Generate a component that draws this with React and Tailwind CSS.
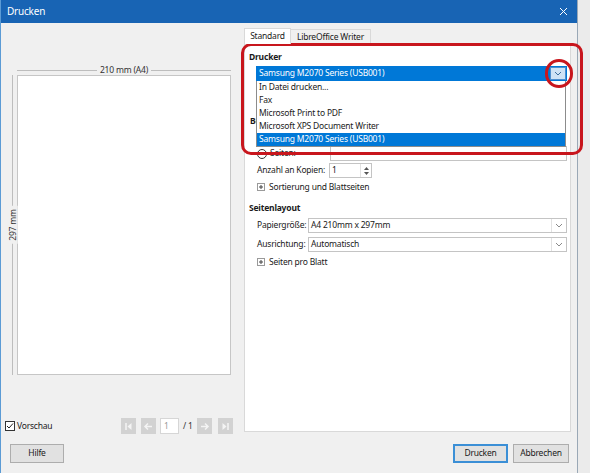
import React from "react";

function Chevron({ color = "#606060" }) {
  return (
    <svg width="8" height="5" viewBox="0 0 8 5">
      <path d="M1 1 L4 4 L7 1" fill="none" stroke={color} strokeWidth="1" />
    </svg>
  );
}

function Plus() {
  return (
    <span className="flex h-[8px] w-[8px] items-center justify-center border border-[#9a9a9a] bg-white">
      <svg width="6" height="6" viewBox="0 0 6 6">
        <path d="M3 1 V5 M1 3 H5" stroke="#444" strokeWidth="1" />
      </svg>
    </span>
  );
}

function Combo({ value, className = "" }) {
  return (
    <div className={"flex h-[15px] items-center border border-[#c4c4c4] bg-white " + className}>
      <span className="flex-1 pl-[2px] leading-none">{value}</span>
      <span className="flex h-full w-[15px] items-center justify-center border-l border-[#e2e2e2]">
        <Chevron color="#8a8a8a" />
      </span>
    </div>
  );
}

function NavBtn({ children }) {
  return (
    <span className="flex h-[16px] w-[15px] items-center justify-center bg-[#d2d2d2]">
      <svg width="11" height="11" viewBox="0 0 11 11">
        {children}
      </svg>
    </span>
  );
}

export default function App() {
  return (
    <div className="relative flex h-[473px] w-[590px] overflow-hidden bg-[#ebebeb] font-['Noto_Sans',sans-serif] text-[8.5px] tracking-[-0.2px] text-[#1a1a1a]">
      <div className="flex h-full w-[578px] flex-col border-x border-l-[#5b9bd5] border-r-[#9aa8b6] bg-[#f0f0f0]">
        {/* title bar */}
        <div className="flex h-[23px] items-center justify-between bg-[#1864b4] pl-[6px] pr-[9px] text-[10px] text-white">
          <span>Drucken</span>
          <svg width="9" height="9" viewBox="0 0 9 9">
            <path d="M1 1 L8 8 M8 1 L1 8" stroke="#fff" strokeWidth="1" />
          </svg>
        </div>

        <div className="flex h-[414px]">
          {/* preview column */}
          <div className="flex w-[242px] flex-col">
            <div className="relative ml-[16px] mt-[42px] h-[10px] w-[214px]">
              <div className="absolute left-0 right-0 top-[5px] border-t border-[#bdbdbd]" />
              <div className="absolute inset-0 flex justify-center">
                <span className="bg-[#f0f0f0] px-[3px] leading-[10px] text-[#333]">210 mm (A4)</span>
              </div>
            </div>
            <div className="flex h-[300px] pl-[7px]">
              <div className="relative w-[9px]">
                <div className="absolute bottom-0 left-[4px] top-0 border-l border-[#bdbdbd]" />
                <div className="absolute inset-0 flex items-center justify-center">
                  <span className="-rotate-90 whitespace-nowrap bg-[#f0f0f0] px-[3px] leading-[10px] text-[#333]">297 mm</span>
                </div>
              </div>
              <div className="w-[214px] border border-[#c6c6c6] bg-white" />
            </div>
            <div className="mt-[43px] flex h-[16px] items-center">
              <div className="flex w-[120px] items-center pl-[4px]">
                <span className="flex h-[10px] w-[10px] items-center justify-center border border-[#333] bg-white">
                  <svg width="8" height="8" viewBox="0 0 8 8">
                    <path d="M1 4 L3 6 L7 1.5" fill="none" stroke="#222" strokeWidth="1" />
                  </svg>
                </span>
                <span className="ml-[2px]">Vorschau</span>
              </div>
              <div className="flex items-center">
                <NavBtn>
                  <path d="M3 2 V9" stroke="#f4f4f4" strokeWidth="1.5" />
                  <path d="M8.5 2 L4.5 5.5 L8.5 9 Z" fill="#f4f4f4" />
                </NavBtn>
                <span className="ml-[5px]">
                  <NavBtn>
                    <path d="M2 5.5 H9 M5 2.5 L2 5.5 L5 8.5" fill="none" stroke="#f4f4f4" strokeWidth="1.5" />
                  </NavBtn>
                </span>
                <span className="ml-[4px] flex h-[16px] w-[19px] items-center border border-[#d6d6d6] bg-white pl-[3px] text-[#9a9a9a]">1</span>
                <span className="ml-[4px] w-[14px] text-[#333]">/ 1</span>
                <NavBtn>
                  <path d="M2 5.5 H9 M6 2.5 L9 5.5 L6 8.5" fill="none" stroke="#f4f4f4" strokeWidth="1.5" />
                </NavBtn>
                <span className="ml-[6px]">
                  <NavBtn>
                    <path d="M8 2 V9" stroke="#f4f4f4" strokeWidth="1.5" />
                    <path d="M2.5 2 L6.5 5.5 L2.5 9 Z" fill="#f4f4f4" />
                  </NavBtn>
                </span>
              </div>
            </div>
          </div>

          {/* settings column */}
          <div className="flex flex-1 flex-col pl-[1px] pr-[6px]">
            <div className="mt-[6px] flex h-[15px] items-end">
              <div className="relative z-10 flex h-[16px] w-[47px] items-center justify-center border border-b-0 border-[#d9d9d9] bg-white">Standard</div>
              <div className="flex h-[15px] w-[80px] items-center justify-center border border-b-0 border-l-0 border-[#d9d9d9] bg-[#f0f0f0]">LibreOffice Writer</div>
            </div>
            <div className="flex h-[388px] flex-col border border-[#d9d9d9] bg-white">
              <div className="mt-[5px] flex h-[14px] items-center pl-[4px] font-bold">Drucker</div>
              <div className="ml-[11px] mr-[3px] mt-[2px] flex h-[15px] items-center border border-[#0078d7] bg-[#0078d7] text-white">
                <span className="flex-1 pl-[2px]">Samsung M2070 Series (USB001)</span>
                <span className="flex h-full w-[16px] items-center justify-center border border-[#4d8fcf] bg-[#cfe3f5]">
                  <Chevron color="#3d6f9e" />
                </span>
              </div>
              <div className="mt-[33px] flex h-[14px] items-center pl-[5px] font-bold">Bereich und Kopien</div>
              <div className="mt-[2px] flex h-[14px] items-center gap-[3px] pl-[12px]">
                <span className="h-[10px] w-[10px] rounded-full border border-[#333]" />
                <span>Alle Seiten</span>
              </div>
              <div className="mt-[2px] flex h-[15px] items-center pl-[12px] pr-[3px]">
                <span className="h-[10px] w-[10px] shrink-0 rounded-full border border-[#333]" />
                <span className="ml-[3px] w-[60px] shrink-0">Seiten:</span>
                <span className="h-full flex-1 border border-[#c4c4c4]" />
              </div>
              <div className="mt-[2px] flex h-[15px] items-center pl-[12px]">
                <span className="w-[72px] shrink-0 whitespace-nowrap">Anzahl an Kopien:</span>
                <span className="flex h-full w-[43px] items-center border border-[#c4c4c4]">
                  <span className="flex-1 pl-[2px]">1</span>
                  <span className="flex h-full w-[11px] flex-col items-center justify-center gap-[2px] border-l border-[#e2e2e2]">
                    <svg width="5" height="3" viewBox="0 0 5 3"><path d="M0 3 L2.5 0 L5 3 Z" fill="#555" /></svg>
                    <svg width="5" height="3" viewBox="0 0 5 3"><path d="M0 0 L2.5 3 L5 0 Z" fill="#555" /></svg>
                  </span>
                </span>
              </div>
              <div className="mt-[2px] flex h-[14px] items-center gap-[4px] pl-[12px]">
                <Plus />
                <span>Sortierung und Blattseiten</span>
              </div>
              <div className="mt-[7px] flex h-[14px] items-center pl-[4px] font-bold">Seitenlayout</div>
              <div className="mt-[3px] flex items-center pl-[12px] pr-[3px]">
                <span className="w-[51px] shrink-0 whitespace-nowrap">Papiergröße:</span>
                <Combo value="A4 210mm x 297mm" className="flex-1" />
              </div>
              <div className="mt-[4px] flex items-center pl-[12px] pr-[3px]">
                <span className="w-[51px] shrink-0 whitespace-nowrap">Ausrichtung:</span>
                <Combo value="Automatisch" className="flex-1" />
              </div>
              <div className="mt-[3px] flex h-[14px] items-center gap-[4px] pl-[12px]">
                <Plus />
                <span>Seiten pro Blatt</span>
              </div>
            </div>
          </div>
        </div>

        {/* footer */}
        <div className="flex items-start pl-[9px] pr-[8px] pt-[7px]">
          <button className="h-[19px] w-[54px] border border-[#adadad] bg-[#e1e1e1]">Hilfe</button>
          <div className="flex-1" />
          <button className="h-[19px] w-[55px] border-2 border-[#3b8fd6] bg-[#e1e1e1]">Drucken</button>
          <button className="ml-[5px] h-[19px] w-[56px] border border-[#adadad] bg-[#e1e1e1]">Abbrechen</button>
        </div>
      </div>

      {/* open printer list */}
      <div className="absolute left-[256px] top-[81px] flex w-[310px] flex-col border border-t-0 border-[#8c8c8c] bg-white">
        {["In Datei drucken...", "Fax", "Microsoft Print to PDF", "Microsoft XPS Document Writer"].map((p) => (
          <div key={p} className="flex h-[13px] items-center pl-[2px]">{p}</div>
        ))}
        <div className="flex h-[13px] items-center bg-[#0078d7] pl-[2px] text-white">Samsung M2070 Series (USB001)</div>
      </div>

      {/* red annotation */}
      <div className="absolute left-[241px] top-[43px] h-[112px] w-[342px] rounded-[10px] border-[3px] border-[#c8161d]" />
      <div className="absolute left-[545px] top-[59px] h-[29px] w-[28px] rounded-full border-[3px] border-[#c8161d]" />
    </div>
  );
}
